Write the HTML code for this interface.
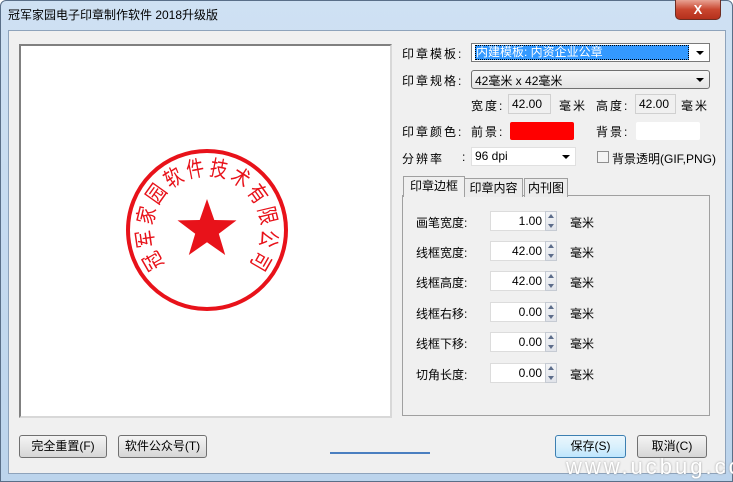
<!DOCTYPE html>
<html><head><meta charset="utf-8"><style>
*{box-sizing:border-box;margin:0;padding:0}
body{width:733px;height:482px;overflow:hidden;font-family:"Liberation Sans","Noto Sans CJK SC",sans-serif;font-size:12px;color:#000;background:#fff;position:relative}
.win{position:absolute;left:0;top:0;width:733px;height:482px;background:linear-gradient(#cfe1f3,#bcd4ec);border:1px solid #5a6f88;border-radius:6px 6px 0 0}
.title{position:absolute;left:8px;top:6px;font-size:12px;color:#000}
.close{position:absolute;left:675px;top:0;width:46px;height:20px;background:linear-gradient(#e8a393,#c9462f 50%,#b5301c);border:1px solid #6d2d22;border-top:none;border-radius:0 0 5px 5px;color:#fff;font-weight:bold;text-align:center;font-size:13px;line-height:19px}
.client{position:absolute;left:8px;top:30px;width:718px;height:444px;background:#f0f0f0;border:1px solid #8ea3bb}
.a{position:absolute;white-space:nowrap}
.preview{position:absolute;left:19px;top:44px;width:373px;height:374px;background:#fff;border:2px solid #808080;border-right-color:#d8d8d8;border-bottom-color:#d8d8d8}
.lbl{position:absolute;font-size:12px;letter-spacing:2px}
.combo{position:absolute;background:#fff;border:1px solid #a0a0a0;height:19px;font-size:12px;padding:1px 3px}
.arrow{position:absolute;right:5px;top:7px;width:0;height:0;border-left:4px solid transparent;border-right:4px solid transparent;border-top:4px solid #000}
.box{position:absolute;background:#fff;border:1px solid #d0d0d0;height:20px;font-size:12px;padding:2px 3px}
.spin{position:absolute;background:#fff;border:1px solid #dcdcdc;width:56px;height:20px;text-align:right;padding:2px 3px;font-size:12px}
.sb{position:absolute;width:12px;height:20px;border:1px solid #c6cbd3;background:linear-gradient(#f4f5f7,#e1e4ea)}
.sb:before{content:"";position:absolute;left:2px;top:2px;border-left:3px solid transparent;border-right:3px solid transparent;border-bottom:4px solid #5c6c8a}
.sb:after{content:"";position:absolute;left:2px;top:12px;border-left:3px solid transparent;border-right:3px solid transparent;border-top:4px solid #5c6c8a}
.btn{position:absolute;height:23px;border:1px solid #707070;border-radius:3px;background:linear-gradient(#f4f4f4,#e6e6e6 50%,#d6d6d6);text-align:center;line-height:21px;font-size:12px}
.tab{position:absolute;height:19px;border:1px solid #a0a0a0;border-bottom:none;background:#ececec;text-align:center;line-height:18px;font-size:12px}
</style></head><body>
<div class="win"></div>
<div class="title">冠军家园电子印章制作软件 2018升级版</div>
<div class="close">X</div>
<div class="client"></div>
<div class="preview">
<svg width="369" height="370" viewBox="21 46 369 370">
<circle cx="207" cy="230" r="79" fill="none" stroke="#e8121a" stroke-width="4"/>
<polygon fill="#e8121a" points="207,199 214.3,220 236.5,220.4 218.8,233.8 225.2,255 207,242.3 188.8,255 195.2,233.8 177.5,220.4 199.7,220"/>
<g font-family="'Noto Sans CJK SC',sans-serif" font-size="22" fill="#e8121a" text-anchor="middle" dominant-baseline="central">
<text transform="translate(151.6,262) rotate(240) scale(0.8,1)">冠</text>
<text transform="translate(143.6,239.1) rotate(261.8) scale(0.8,1)">军</text>
<text transform="translate(144.8,215) rotate(283.6) scale(0.8,1)">家</text>
<text transform="translate(154.9,192.8) rotate(305.5) scale(0.8,1)">园</text>
<text transform="translate(172.4,176.2) rotate(327.3) scale(0.8,1)">软</text>
<text transform="translate(194.9,167.2) rotate(349.1) scale(0.8,1)">件</text>
<text transform="translate(219.1,167.2) rotate(10.9) scale(0.8,1)">技</text>
<text transform="translate(241.6,176.2) rotate(32.7) scale(0.8,1)">术</text>
<text transform="translate(259.1,192.8) rotate(54.5) scale(0.8,1)">有</text>
<text transform="translate(269.2,215) rotate(76.4) scale(0.8,1)">限</text>
<text transform="translate(270.4,239.1) rotate(98.2) scale(0.8,1)">公</text>
<text transform="translate(262.4,262) rotate(120) scale(0.8,1)">司</text>
</g>
</svg>
</div>
<div class="lbl" style="left:402px;top:45px">印章模板:</div>
<div class="combo" style="left:471px;top:43px;width:239px;border-color:#7a7a7a"><span style="background:#3399ff;color:#fff;display:inline-block;width:214px;border:1px dotted #000;line-height:13px">内建模板: 内资企业公章</span><div class="arrow"></div></div>
<div class="lbl" style="left:402px;top:72px">印章规格:</div>
<div class="combo" style="left:471px;top:70px;width:239px;border-color:#707070;border-radius:3px;background:linear-gradient(#f6f6f6,#e4e4e4)">42毫米 x 42毫米<div class="arrow"></div></div>
<div class="lbl" style="left:471px;top:97px">宽度:</div>
<div class="box" style="left:508px;top:94px;width:43px;background:#f0f0f0">42.00</div>
<div class="lbl" style="left:559px;top:97px">毫米</div>
<div class="lbl" style="left:596px;top:97px">高度:</div>
<div class="box" style="left:635px;top:94px;width:41px;background:#f0f0f0">42.00</div>
<div class="lbl" style="left:681px;top:97px">毫米</div>
<div class="lbl" style="left:402px;top:123px">印章颜色:</div>
<div class="lbl" style="left:471px;top:123px">前景:</div>
<div class="a" style="left:510px;top:122px;width:64px;height:18px;background:#ff0000;border-radius:2px"></div>
<div class="lbl" style="left:596px;top:123px">背景:</div>
<div class="a" style="left:636px;top:122px;width:64px;height:18px;background:#fff;border-radius:2px"></div>
<div class="lbl" style="left:402px;top:150px">分辨率</div>
<div class="lbl" style="left:462px;top:150px">:</div>
<div class="combo" style="left:471px;top:147px;width:105px;border-color:#e0e0e0">96 dpi<div class="arrow"></div></div>
<div class="a" style="left:597px;top:151px;width:12px;height:12px;border:1px solid #8f8f8f;background:#f4f4f4"></div>
<div class="a" style="left:612px;top:150px;font-size:12px">背景透明(GIF,PNG)</div>
<div class="a" style="left:402px;top:195px;width:308px;height:221px;border:1px solid #a0a0a0;background:#f0f0f0"></div>
<div class="tab" style="left:464px;top:178px;width:59px">印章内容</div>
<div class="tab" style="left:524px;top:178px;width:44px">内刊图</div>
<div class="tab" style="left:403px;top:176px;width:62px;height:21px;background:#f0f0f0">印章边框</div>
<div class="a" style="left:416px;top:214px">画笔宽度:</div><div class="spin" style="left:490px;top:211px">1.00</div><div class="sb" style="left:545px;top:211px"></div><div class="a" style="left:570px;top:214px">毫米</div>
<div class="a" style="left:416px;top:244px">线框宽度:</div><div class="spin" style="left:490px;top:241px">42.00</div><div class="sb" style="left:545px;top:241px"></div><div class="a" style="left:570px;top:244px">毫米</div>
<div class="a" style="left:416px;top:274px">线框高度:</div><div class="spin" style="left:490px;top:271px">42.00</div><div class="sb" style="left:545px;top:271px"></div><div class="a" style="left:570px;top:274px">毫米</div>
<div class="a" style="left:416px;top:305px">线框右移:</div><div class="spin" style="left:490px;top:302px">0.00</div><div class="sb" style="left:545px;top:302px"></div><div class="a" style="left:570px;top:305px">毫米</div>
<div class="a" style="left:416px;top:335px">线框下移:</div><div class="spin" style="left:490px;top:332px">0.00</div><div class="sb" style="left:545px;top:332px"></div><div class="a" style="left:570px;top:335px">毫米</div>
<div class="a" style="left:416px;top:366px">切角长度:</div><div class="spin" style="left:490px;top:363px">0.00</div><div class="sb" style="left:545px;top:363px"></div><div class="a" style="left:570px;top:366px">毫米</div>
<div class="btn" style="left:19px;top:435px;width:88px">完全重置(F)</div>
<div class="btn" style="left:118px;top:435px;width:89px">软件公众号(T)</div>
<div class="a" style="left:330px;top:452px;width:100px;height:2px;background:#4a7fc0"></div>
<div class="btn" style="left:555px;top:435px;width:71px;border-color:#3c7fb1;background:linear-gradient(#eaf6fd,#d9f0fc 50%,#bee6fd)">保存(S)</div>
<div class="btn" style="left:637px;top:435px;width:70px">取消(C)</div>
<div class="a" style="left:566px;top:454px;font-size:22px;letter-spacing:3px;color:#fff;text-shadow:0 0 2px #999">www.ucbug.cc</div>
</body></html>
